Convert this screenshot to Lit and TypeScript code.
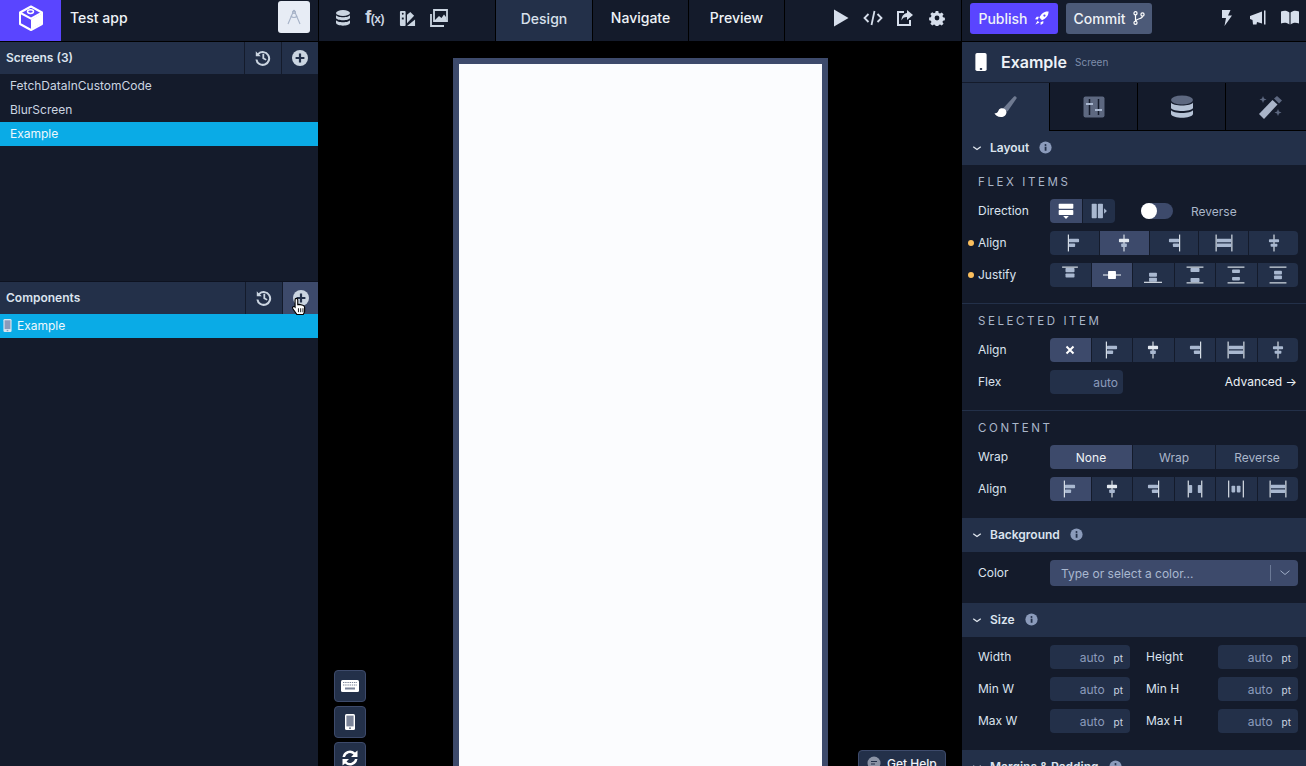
import { LitElement, html, css, svg } from "lit";
import { customElement } from "lit/decorators.js";

const FG = "#e2e8f0";
const MID = "#a9b8d0";

const ic = (size: number, body: unknown, vb = 16) =>
  html`<svg class="ic" width=${size} height=${size} viewBox="0 0 ${vb} ${vb}">${body}</svg>`;

const vl = (x: number) => svg`<rect x=${x - 0.5} y="0.5" width="1" height="15" fill=${FG}/>`;
const hl = (y: number, x1 = 2, x2 = 14) => svg`<rect x=${x1} y=${y - 0.5} width=${x2 - x1} height="1" fill=${FG}/>`;
const bx = (x: number, y: number, w: number, h: number, f = MID) => svg`<rect x=${x} y=${y} width=${w} height=${h} rx="0.7" fill=${f}/>`;

const align: Record<string, unknown> = {
  start: svg`${vl(3)}${bx(3.5, 4.3, 9, 3)}${bx(3.5, 8.5, 5.5, 3)}`,
  center: svg`${vl(8)}${bx(3.5, 4.3, 9, 3, FG)}${bx(5.5, 8.5, 5, 3)}`,
  end: svg`${vl(13)}${bx(3.5, 4.3, 9, 3)}${bx(7, 8.5, 5.5, 3)}`,
  stretch: svg`${vl(1)}${vl(15)}${bx(1.5, 4.3, 13, 3)}${bx(1.5, 8.5, 13, 3)}`,
  base: svg`${vl(8)}${bx(3.5, 4.6, 9, 2.8)}${bx(5, 8.6, 6, 2.8)}`,
  between: svg`${vl(2)}${vl(14)}${bx(2.5, 4.5, 3, 7)}${bx(10.5, 4.5, 3, 7)}`,
  around: svg`${vl(1.5)}${vl(14.5)}${bx(4, 5, 3.3, 6)}${bx(8.7, 5, 3.3, 6)}`,
};
const justify: Record<string, unknown> = {
  start: svg`${hl(1, 1, 15)}${bx(4, 1.8, 8, 3.8)}${bx(4, 6.6, 8, 3.6)}`,
  center: svg`${hl(8, 0, 16)}${bx(4.5, 4.5, 7, 7, "#fff")}`,
  end: svg`${bx(4.5, 6, 7, 3.5)}${bx(4.5, 10.5, 7, 3.5)}${hl(14.5, 0, 16)}`,
  between: svg`${hl(1, 0.5, 15.5)}${bx(4, 1.8, 8, 3.5)}${bx(4, 10.7, 8, 3.5)}${hl(15, 0.5, 15.5)}`,
  around: svg`${hl(1, 0.5, 15.5)}${bx(4.5, 3.2, 7, 3)}${bx(4.5, 9.8, 7, 3)}${hl(15, 0.5, 15.5)}`,
  evenly: svg`${hl(1, 0.5, 15.5)}${bx(4.5, 4.3, 7, 3.2)}${bx(4.5, 8.5, 7, 3.2)}${hl(15, 0.5, 15.5)}`,
};

const info = (c = "#8b9bbb") => ic(13, svg`<circle cx="8" cy="8" r="7.5" fill=${c}/><rect x="7" y="7" width="2.2" height="5" fill="#233049"/><circle cx="8" cy="4.8" r="1.2" fill="#233049"/>`);
const chev = ic(10, svg`<path d="M2 6l6 4.500 6-4.500" fill="none" stroke=${FG} stroke-width="2"/>`);
const history = ic(16, svg`<path d="M.8 1.200v5h5L4 4.500A5.400 5.400 0 1 1 2.400 9.400H.4A7.400 7.400 0 1 0 2.600 3.200z" fill="#cbd5e1"/><path d="M7.400 3.800h1.800v3.900l2.400 1.500-.9 1.400L7.400 8.700z" fill="#cbd5e1"/>`);
const plus = ic(16, svg`<circle cx="8" cy="8" r="8" fill="#cbd5e1"/><path d="M8 3.600v8.800M3.600 8h8.800" stroke="#233049" stroke-width="2.200"/>`);
const phone = (s: number, f = "#fff", scr = "#7b8499", dot = scr) => ic(s, svg`<rect x="3" y="0" width="10" height="16" rx="1.500" fill=${f}/><rect x="4.400" y="1.600" width="7.200" height="10.800" fill=${scr}/><rect x="7" y="13.400" width="2" height="1.600" fill=${dot}/>`);

@customElement("app-root")
export class AppRoot extends LitElement {
  static styles = css`
    :host { display: block; width: 100%; height: 100vh; overflow: hidden; background: #000; font-family: Inter, "Liberation Sans", sans-serif; color: #e2e8f0; font-size: 12px; }
    * { box-sizing: border-box; }
    .ic { display: block; flex: none; }
    .app { display: grid; grid-template-rows: 41px 1fr; row-gap: 1px; height: 100%; }
    .top { display: grid; grid-template-columns: 318px 642px 1fr; column-gap: 1px; background: #000; }
    .top > div { background: #141b2b; display: flex; align-items: center; height: 41px; }
    .logo { width: 61px; height: 41px; background: #5a45ff; display: flex; align-items: center; justify-content: center; flex: none; margin-right: 1px; padding-bottom: 5px; }
    .appname { font-size: 14px; font-weight: 500; color: #eef2f7; margin-left: 8px; flex: 1; margin-top: -6px; }
    .avatar { width: 32px; height: 32px; border-radius: 3px; background: #e7ecf5; margin-right: 8px; margin-top: -7px; display: flex; align-items: center; justify-content: center; }
    .tools { display: flex; gap: 14px; margin-left: 16px; width: 160px; margin-top: -5px; align-items: center; }
    .fx { width: 20px; font-family: "Liberation Sans", sans-serif; font-weight: 700; font-size: 19px; line-height: 18px; color: #cbd5e1; white-space: nowrap; letter-spacing: -0.5px; }
    .fx small { font-size: 12px; }
    .tabs { display: flex; height: 41px; background: #000; gap: 1px; padding: 0 1px; }
    .tab { width: 95px; background: #141b2b; display: flex; align-items: center; justify-content: center; font-size: 14px; font-weight: 500; padding-bottom: 7px; color: #eef2f7; }
    .tab.on { background: #233049; padding-bottom: 4px; width: 96px; color: #d8e0ec; }
    .run { display: flex; align-items: center; gap: 13px; margin-left: 47px; margin-top: -5px; }
    .run .gear { margin-left: 2px; }
    .btn { height: 31px; border-radius: 3px; display: flex; align-items: center; justify-content: center; gap: 7px; font-size: 14px; font-weight: 500; color: #eef2f7; margin-top: -5px; }
    .pub { width: 88px; background: #5a45ff; margin-left: 8px; padding-right: 1px; }
    .com { width: 86px; background: #4c5a78; margin-left: 8px; padding-left: 2px; }
    .extra { display: flex; gap: 14px; margin-left: auto; margin-right: 7px; margin-top: -5px; align-items: center; }
    .body { display: grid; grid-template-columns: 318px 642px 1fr; column-gap: 1px; min-height: 0; overflow: hidden; }
    .left { background: #141b2b; position: relative; overflow: hidden; }
    .shead { height: 32px; background: #233049; display: flex; align-items: stretch; font-weight: 600; color: #dbe3ee; }
    .shead .t { flex: 1; display: flex; align-items: center; padding: 0 0 2px 6px; }
    .shead .b { width: 36px; display: flex; align-items: center; justify-content: center; border-left: 1px solid #141b2b; padding-bottom: 1px; box-sizing: content-box; }
    .shead .b.hover { background: #3d4a6b; width: 35px; }
    .screens { height: 240px; border-bottom: 1px solid #0d1220; }
    .item { height: 24px; display: flex; align-items: center; padding: 0 0 2px 10px; color: #cbd5e1; gap: 3px; }
    .item.sel { background: #0aabe6; color: #eef8fd; }
    .item.comp { padding-left: 1px; }
    .cursor { position: absolute; left: 290px; top: 255px; }
    .center { position: relative; overflow: hidden; background: #000; display: flex; justify-content: center; align-items: flex-start; padding-top: 16px; }
    .device { width: 375px; height: 812px; flex: none; border: 6px solid #3d4a6b; background: #fbfcfe; }
    .float { position: absolute; left: 15px; top: 628px; display: flex; flex-direction: column; gap: 4px; }
    .fb { width: 32px; height: 32px; background: #233049; border: 1px solid #3d4a6b; border-radius: 4px; display: flex; align-items: center; justify-content: center; }
    .help { position: absolute; left: 539px; top: 708px; width: 88px; height: 30px; padding-left: 8px; background: #233049; border: 1px solid #3d4a6b; border-radius: 4px; display: flex; align-items: flex-start; padding-top: 5px; gap: 6px; font-weight: 500; color: #eef2f7; }
    .right { background: #141b2b; overflow: hidden; }
    .rhead { height: 40px; background: #233049; display: flex; align-items: center; padding-left: 10px; gap: 11px; }
    .rhead b { font-size: 16px; font-weight: 600; color: #eef2f7; margin-right: -3px; }
    .rhead span { font-size: 10px; color: #7f8eab; }
    .rtabs { display: flex; height: 48px; margin-top: 1px; background: #000; gap: 1px; border-bottom: 1px solid #000; }
    .rtab { width: 87px; flex: none; background: #141b2b; display: flex; align-items: center; justify-content: center; }
    .rtab.on { background: #233049; margin-bottom: -1px; }
    .sec { height: 34px; background: #233049; display: flex; align-items: center; padding: 0 0 1px 10px; font-weight: 600; color: #dbe3ee; }
    .sec .lbl { margin-left: 8px; margin-right: 10px; }
    .sub { padding: 0 8px 0 16px; }
    .sub.s1 { padding-top: 10px; padding-bottom: 16px; }
    .sub.s2 { padding-top: 10px; padding-bottom: 16px; }
    .sub.s3 { padding-top: 10px; padding-bottom: 17px; }
    .sub.s4 { padding-bottom: 17px; }
    .cap { font-size: 11.5px; letter-spacing: 2.6px; color: #aab6c9; height: 14px; line-height: 14px; }
    .row { display: flex; align-items: center; height: 24px; margin-top: 8px; position: relative; }
    .row.first { margin-top: 10px; }
    .row.tall { height: 26px; }
    .row > .name { width: 72px; color: #dbe3ee; padding-bottom: 2px; }
    .dot { position: absolute; left: -10px; top: 9px; width: 6px; height: 6px; border-radius: 50%; background: #fbbf5d; }
    .seg { display: flex; gap: 1px; width: 248px; height: 24px; border-radius: 4px; overflow: hidden; }
    .seg.dir { width: 65px; }
    .s { flex: 1; background: #233049; display: flex; align-items: center; justify-content: center; color: #aab6c9; }
    .s.on { background: #3d4a6b; color: #eef2f7; }
    .toggle { width: 32px; height: 16px; border-radius: 8px; background: #3d4a6b; margin-left: 26px; position: relative; }
    .toggle i { position: absolute; left: 0; top: 0; width: 16px; height: 16px; border-radius: 50%; background: #fff; }
    .rev { margin-left: 18px; color: #aab6c9; }
    .inp { height: 24px; background: #233049; border-radius: 4px; display: flex; align-items: center; justify-content: flex-end; color: #8b9bbb; padding: 1px 7px 0 0; width: 80px; }
    .inp.flex { width: 73px; padding-right: 5px; }
    .inp u { text-decoration: none; color: #cbd5e1; font-size: 10px; margin-left: 9px; }
    .adv { margin-left: auto; color: #eef2f7; margin-right: 1px; padding-bottom: 1px; }
    .div { height: 1px; background: #233049; }
    .color { width: 248px; height: 26px; background: #3d4a6b; border-radius: 4px; display: flex; align-items: center; padding-left: 11px; color: #a9b8d0; }
    .color .sp { margin-left: auto; width: 1px; height: 16px; background: #6b7996; }
    .color .dw { width: 27px; display: flex; justify-content: center; }
    .name2 { width: 72px; margin-left: 16px; color: #dbe3ee; padding-bottom: 2px; }
  `;

  private seg(items: unknown[], on: number, cls = "") {
    return html`<div class="seg ${cls}">${items.map((i, n) => html`<div class="s ${n === on ? "on" : ""}">${i}</div>`)}</div>`;
  }

  private sizeRow(a: string, b: string) {
    const inp = html`<div class="inp">auto<u>pt</u></div>`;
    return html`<div class="row"><div class="name">${a}</div>${inp}<div class="name2">${b}</div>${inp}</div>`;
  }

  render() {
    const a = (k: string) => ic(18, align[k]);
    const j = (k: string) => ic(18, justify[k]);
    return html`<div class="app">
      <div class="top">
        <div>
          <div class="logo">${ic(28, svg`
            <path d="M14 2.500 25 8.500v11.500L14 26 3 20V8.500z" fill="none" stroke="#fff" stroke-width="2" stroke-linejoin="round"/>
            <path d="M3.600 9 14 14.600 24.400 9" fill="none" stroke="#fff" stroke-width="2"/>
            <path d="M14 15.500 24.500 9.800V19.600L14 25.200z" fill="#fff"/>
            <ellipse cx="13.500" cy="7.600" rx="3" ry="1.800" fill="none" stroke="#fff" stroke-width="1.500"/>`, 28)}</div>
          <div class="appname">Test app</div>
          <div class="avatar">${ic(18, svg`<path d="M9 2 3 16M9 2l6 14M5.600 8Q9 11 12.400 8" fill="none" stroke="#a6b2c7" stroke-width="1.100"/><circle cx="9" cy="4" r="1.500" fill="none" stroke="#a6b2c7"/>`, 18)}</div>
        </div>
        <div>
          <div class="tools">
            ${ic(16, svg`<ellipse cx="8" cy="3" rx="7" ry="3" fill="#cbd5e1"/><path d="M1 5c1 3 13 3 14 0v3c-1 3-13 3-14 0zM1 10c1 3 13 3 14 0v3c-1 3.500-13 3.500-14 0z" fill="#cbd5e1"/>`)}
            <div class="fx">f<small>(x)</small></div>
            ${ic(17, svg`<rect x="1" y="1" width="6" height="16" rx="1" fill="#cbd5e1"/><circle cx="4" cy="4" r="1" fill="#141b2b"/><rect x="3" y="8" width="2" height="2" fill="#141b2b"/><path d="M8.500 5 12 2l4 4-7.500 8z" fill="#cbd5e1"/><path d="M8.500 17 17 10v7z" fill="#cbd5e1"/>`, 18)}
            ${ic(18, svg`<path d="M4 1h13v11H4z" fill="none" stroke="#cbd5e1" stroke-width="1.800"/><path d="M1 5v12h13" fill="none" stroke="#cbd5e1" stroke-width="1.800"/><path d="M5 11l4-4 2.500 2L14 5.500 16 8v3.500H5z" fill="#cbd5e1"/>`, 18)}
          </div>
          <div class="tabs"><div class="tab on">Design</div><div class="tab">Navigate</div><div class="tab">Preview</div></div>
          <div class="run">
            ${ic(18, svg`<path d="M2 .5 16.500 9 2 17.500z" fill="#d6deeb"/>`, 18)}
            ${ic(20, svg`<path d="M5.500 6 1.500 10l4 4M14.500 6l4 4-4 4" fill="none" stroke="#d6deeb" stroke-width="1.800"/><path d="M11.500 3 8.500 17" stroke="#d6deeb" stroke-width="1.800"/>`, 20)}
            ${ic(18, svg`<path d="M8 3H2v13h12v-5" fill="none" stroke="#d6deeb" stroke-width="2"/><path d="M11 1l6 5-6 5V8c-3 0-4.500 1-5.500 3.500C5.500 7 8 4.500 11 4z" fill="#d6deeb"/>`, 18)}
            <span class="gear">${ic(16, svg`<path d="M6.500 0h3l.4 2.200 1.600.7 1.900-1.300 2.100 2.100-1.300 1.900.7 1.600 2.100.4v3l-2.100.4-.7 1.600 1.300 1.900-2.100 2.100-1.900-1.300-1.600.7-.4 2.100h-3l-.4-2.100-1.600-.7-1.900 1.300L.4 14.500l1.300-1.900L1 11 -1 10.500v-3L1 7l.7-1.600L.4 3.500 2.500 1.400 4.400 2.700 6 2z" transform="translate(1 1) scale(.875)" fill="#d6deeb"/><circle cx="8" cy="8" r="2.400" fill="#141b2b"/>`)}</span>
          </div>
        </div>
        <div>
          <div class="btn pub">Publish ${ic(14, svg`<path d="M15.500.5c-5-.5-8.500 2.500-10.500 7l3 3c4.500-2 7.500-5 7.500-10z" fill="#fff"/><circle cx="10.800" cy="5.200" r="1.300" fill="#5a45ff"/><path d="M4.500 6.500H2L0 9.500l3.200.2zM9.500 11.500V14l-3 2-.2-3.200zM3 11l2 2-4.500 2.500z" fill="#fff"/>`)}</div>
          <div class="btn com">Commit ${ic(14, svg`<circle cx="4" cy="2.500" r="1.800" fill="none" stroke="#fff" stroke-width="1.400"/><circle cx="4" cy="13.500" r="1.800" fill="none" stroke="#fff" stroke-width="1.400"/><circle cx="12" cy="4" r="1.800" fill="none" stroke="#fff" stroke-width="1.400"/><path d="M4 4.500v7M12 6c0 3-6 2.500-7.500 5" fill="none" stroke="#fff" stroke-width="1.400"/>`)}</div>
          <div class="extra">
            ${ic(16, svg`<path d="M3 0h8.500L9 5.500h4L5.500 16 7 8H3z" fill="#d6deeb"/>`)}
            ${ic(18, svg`<path d="M1 7l12-4.500v12L8 13l-.5 2.500H4L3.500 11 1 10z" fill="#d6deeb"/><rect x="15" y="1.500" width="1.500" height="14" fill="#d6deeb"/>`, 18)}
            ${ic(18, svg`<path d="M0 2.500c3-1 6-1 8.400 1v12C6 13.500 3 13.500 0 14.500zM18 2.500c-3-1-6-1-8.400 1v12c2.400-2 5.400-2 8.400-1z" fill="#d6deeb"/>`, 18)}
          </div>
        </div>
      </div>
      <div class="body">
        <div class="left">
          <div class="screens">
            <div class="shead"><div class="t">Screens (3)</div><div class="b">${history}</div><div class="b">${plus}</div></div>
            <div class="item">FetchDataInCustomCode</div>
            <div class="item">BlurScreen</div>
            <div class="item sel">Example</div>
          </div>
          <div class="shead"><div class="t">Components</div><div class="b">${history}</div><div class="b hover">${plus}</div></div>
          <div class="item sel comp">${phone(13, "#dbe6f0", "#8b9bbb")}Example</div>
          <div class="cursor">${ic(18, svg`<path d="M5.500 1.200c.9 0 1.400.6 1.400 1.400v4.200l1.500-.2 3 .7c1 .3 1.600 1 1.600 2V13l-1.200 2.500H6L2.500 10.500c-.5-.8-.3-1.500.3-1.900.6-.3 1.200-.1 1.700.4V2.600c0-.8.400-1.400 1-1.400z" fill="#fff" stroke="#000" stroke-width="1"/><path d="M7.500 10v3.500M9.500 10v3.500M11.500 10v3.500" stroke="#000" stroke-width=".8"/>`)}</div>
        </div>
        <div class="center">
          <div class="device"></div>
          <div class="float">
            <div class="fb">${ic(18, svg`<rect x="0" y="3" width="18" height="12" rx="1.500" fill="#fff"/><path d="M2 5.500h14M2 8h14" stroke="#7b8499" stroke-width="1.200" stroke-dasharray="1.400 .8"/><rect x="4" y="10.500" width="10" height="2" fill="#7b8499"/>`, 18)}</div>
            <div class="fb">${phone(16)}</div>
            <div class="fb">${ic(18, svg`<path d="M1.500 8A7.500 7.500 0 0 1 14 3.500l2.500-2v6.500H10l2.500-2.500A5 5 0 0 0 4 8zM16.500 10A7.500 7.500 0 0 1 4 14.500l-2.500 2V10H8l-2.500 2.500A5 5 0 0 0 14 10z" fill="#fff"/>`, 18)}</div>
          </div>
          <div class="help">${ic(14, svg`<circle cx="7" cy="7" r="6.500" fill="#8b93a5"/><path d="M4 5.500h6M4 8h4" stroke="#233049" stroke-width="1.200"/>`, 14)}Get Help</div>
        </div>
        <div class="right">
          <div class="rhead">${phone(18, "#fff", "#fff", "#233049")}<b>Example</b><span>Screen</span></div>
          <div class="rtabs">
            <div class="rtab on">${ic(24, svg`<path d="M9 13.500 20 1.500c1.200-1 3.200.5 2.500 2L13.500 16.500z" fill="#6f7a91"/><path d="M.5 18c2 1 3.500-1 4.500-3.500 2-2.500 7.500-1.500 7.500 2.500 0 3-2.500 5-5.500 5-3.500 0-6-2-6.500-4z" fill="#fff"/>`, 24)}</div>
            <div class="rtab">${ic(24, svg`<rect x="1.500" y="1.500" width="21" height="21" rx="2" fill="#5d6880"/><path d="M7.500 4v16M16.500 4v16" stroke="#141b2b" stroke-width="1.500"/><path d="M4 9h7M13 15h7" stroke="#a9b8d0" stroke-width="2.200"/>`, 24)}</div>
            <div class="rtab">${ic(24, svg`<ellipse cx="12" cy="5" rx="11" ry="4.500" fill="#5d6880"/><path d="M1 7.500c1.500 4 20.500 4 22 0V13c-1.500 4-20.500 4-22 0zM1 15c1.500 4 20.500 4 22 0v4c-1.500 5-20.500 5-22 0z" fill="#b6c3d6"/>`, 24)}</div>
            <div class="rtab">${ic(24, svg`<path d="M1 19 14.500 5l5 4.500L6 24z" fill="#a9b4c8"/><path d="M16 3.500 19 1l5 4.500-3 3z" fill="#5d6880"/><path d="M5 1l1 2.500L8.500 4.500 6 5.500 5 8 4 5.500 1.500 4.500 4 3.500zM20 14l1 2.500 2.500 1-2.500 1-1 2.500-1-2.500-2.500-1 2.500-1z" fill="#5d6880"/>`, 24)}</div>
          </div>
          <div class="sec">${chev}<span class="lbl">Layout</span>${info()}</div>
          <div class="sub s1">
            <div class="cap">FLEX ITEMS</div>
            <div class="row first"><div class="name">Direction</div>
              ${this.seg([
                ic(18, svg`<rect x="1.500" y="1.500" width="13" height="4.500" rx=".7" fill="#fff"/><rect x="1.500" y="7" width="13" height="4.500" rx=".7" fill="#fff"/><path d="M5.500 12.500h5L8 15z" fill="#fff"/>`),
                ic(18, svg`<rect x="1.500" y="1.500" width="4.500" height="13" rx=".7" fill="${MID}"/><rect x="7" y="1.500" width="4.500" height="13" rx=".7" fill="${MID}"/><path d="M12.500 5.500v5L15 8z" fill="${MID}"/>`),
              ], 0, "dir")}
              <div class="toggle"><i></i></div><div class="rev">Reverse</div></div>
            <div class="row"><i class="dot"></i><div class="name">Align</div>${this.seg([a("start"), a("center"), a("end"), a("stretch"), a("base")], 1)}</div>
            <div class="row"><i class="dot"></i><div class="name">Justify</div>${this.seg([j("start"), j("center"), j("end"), j("between"), j("around"), j("evenly")], 1)}</div>
          </div>
          <div class="div"></div>
          <div class="sub s2">
            <div class="cap">SELECTED ITEM</div>
            <div class="row first"><div class="name">Align</div>${this.seg([ic(16, svg`<path d="M4.500 4.500l7 7M11.500 4.500l-7 7" stroke="#fff" stroke-width="2"/>`), a("start"), a("center"), a("end"), a("stretch"), a("base")], 0)}</div>
            <div class="row"><div class="name">Flex</div><div class="inp flex">auto</div><div class="adv">Advanced →</div></div>
          </div>
          <div class="div"></div>
          <div class="sub s3">
            <div class="cap">CONTENT</div>
            <div class="row first"><div class="name">Wrap</div>${this.seg(["None", "Wrap", "Reverse"], 0)}</div>
            <div class="row"><div class="name">Align</div>${this.seg([a("start"), a("center"), a("end"), a("between"), a("around"), a("stretch")], 0)}</div>
          </div>
          <div class="sec">${chev}<span class="lbl">Background</span>${info()}</div>
          <div class="sub s4">
            <div class="row tall"><div class="name">Color</div><div class="color">Type or select a color...<i class="sp"></i><div class="dw">${ic(12, svg`<path d="M2 5l6 5 6-5" fill="none" stroke="#a9b8d0" stroke-width="1.200"/>`)}</div></div></div>
          </div>
          <div class="sec">${chev}<span class="lbl">Size</span>${info()}</div>
          <div class="sub s4">
            ${this.sizeRow("Width", "Height")}${this.sizeRow("Min W", "Min H")}${this.sizeRow("Max W", "Max H")}
          </div>
          <div class="sec">${chev}<span class="lbl">Margins &amp; Padding</span>${info()}</div>
        </div>
      </div>
    </div>`;
  }
}
